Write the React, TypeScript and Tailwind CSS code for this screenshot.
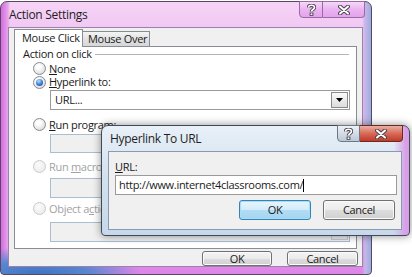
import React from 'react';

const font = "font-['Open_Sans',sans-serif] text-[11px] leading-[14px] tracking-[-0.3px] whitespace-nowrap";

const Radio: React.FC<{ checked?: boolean; disabled?: boolean }> = ({ checked, disabled }) => (
  <span
    className={`w-[13px] h-[13px] rounded-full border flex items-center justify-center shrink-0 ${
      disabled
        ? 'border-[#cacaca] bg-[radial-gradient(circle_at_40%_35%,#fbfbfb,#e8e8e8)]'
        : 'border-[#8a8a8a] bg-[radial-gradient(circle_at_40%_35%,#ffffff_20%,#cfcfcf)]'
    }`}
  >
    {checked && (
      <span className="w-[7px] h-[7px] rounded-full bg-[radial-gradient(circle_at_40%_30%,#b8e2ff,#2a73d0_60%,#164a9a)]" />
    )}
  </span>
);

const XGlyph: React.FC = () => (
  <svg width="12" height="10" viewBox="0 0 12 10">
    <path d="M2 1.5 L10 8.5 M10 1.5 L2 8.5" stroke="#4a4250" strokeWidth="4" strokeLinecap="round" />
    <path d="M2 1.5 L10 8.5 M10 1.5 L2 8.5" stroke="#ffffff" strokeWidth="2" strokeLinecap="round" />
  </svg>
);

const HelpGlyph: React.FC = () => (
  <svg width="9" height="12" viewBox="0 0 9 12">
    <path d="M1.5 3.5 C1.5 0.5 7.5 0.5 7.5 3.5 C7.5 5.5 4.5 5.5 4.5 7.5" fill="none" stroke="#4a4250" strokeWidth="3.6" />
    <path d="M1.5 3.5 C1.5 0.5 7.5 0.5 7.5 3.5 C7.5 5.5 4.5 5.5 4.5 7.5" fill="none" stroke="#ffffff" strokeWidth="1.6" />
    <rect x="2.6" y="8.6" width="3.8" height="3.2" fill="#4a4250" />
    <rect x="3.6" y="9.4" width="1.8" height="1.6" fill="#ffffff" />
  </svg>
);

const DropButton: React.FC<{ disabled?: boolean }> = ({ disabled }) => (
  <div
    className={`w-[17px] h-[16px] border flex items-center justify-center ${
      disabled ? 'border-[#c4ccd4] bg-[#ececec]' : 'border-[#8a8a8a] bg-[linear-gradient(180deg,#fafafa,#dcdcdc)]'
    }`}
  >
    <svg width="7" height="4" viewBox="0 0 7 4">
      <path d="M0 0 H7 L3.5 4 Z" fill={disabled ? '#b0b0b0' : '#000'} />
    </svg>
  </div>
);

const WinButton: React.FC<{ children: React.ReactNode; primary?: boolean; className?: string }> = ({ children, primary, className }) => (
  <div
    className={`rounded-[3px] border flex items-center justify-center text-[#1a1a1a] ${
      primary
        ? 'border-[#3c7fb1] bg-[linear-gradient(180deg,#e6f5fd_0%,#d2ecfa_50%,#b2dcf4_51%,#a4d4f0_100%)] shadow-[inset_0_0_0_1px_#9fe0ff]'
        : 'border-[#707070] bg-[linear-gradient(180deg,#f4f4f4_0%,#ebebeb_50%,#dddddd_51%,#d0d0d0_100%)] shadow-[inset_0_0_0_1px_#fbfbfb]'
    } ${className ?? ''}`}
  >
    {children}
  </div>
);

export default function App() {
  return (
    <div className={`relative w-[412px] h-[277px] bg-white overflow-hidden text-[#1a1a1a] ${font}`}>
      {/* Action Settings window */}
      <div className="mt-[1px] w-[372px] h-[274px] border border-[#5a4664] rounded-t-[7px] rounded-b-[4px] flex flex-col bg-[radial-gradient(ellipse_28%_10%_at_10%_100%,#3d74c4_0%,#5a86d0_50%,transparent_100%),linear-gradient(90deg,#d46ae0_0px,#e6a6ea_7px,transparent_9px),linear-gradient(270deg,#9aaede_0px,#c6b6e8_6px,transparent_9px),linear-gradient(180deg,#f6d4f6_0%,#ecbaf0_20%,#e7a6ec_60%,#de86e8_100%)]">
        <div className="h-[25px] flex items-center relative">
          <span className="pl-[8px] text-[12px] text-[#1e1e1e]">Action Settings</span>
          <div className="ml-auto mr-[6px] self-start -mt-px flex">
            <div className="w-[24px] h-[17px] border border-[#9a6aa4] rounded-bl-[4px] bg-[linear-gradient(180deg,#f6d8f8,#eab4f0_50%,#e4a2ec)] flex items-center justify-center">
              <HelpGlyph />
            </div>
            <div className="w-[42px] h-[17px] border border-l-0 border-[#9a6aa4] rounded-br-[4px] bg-[linear-gradient(180deg,#f6d8f8,#eab4f0_50%,#e4a2ec)] flex items-center justify-center">
              <XGlyph />
            </div>
          </div>
        </div>
        <div className="ml-[7px] w-[355px] h-[240px] border border-[#9c82aa] bg-[#f0f0f0] flex flex-col">
          {/* tabs */}
          <div className="ml-[5px] h-[19px] flex items-end">
            <div className="relative z-10 h-[18px] w-[69px] border border-b-0 border-[#898c95] bg-white pl-[7px] flex items-center">
              Mouse Click
            </div>
            <div className="h-[16px] w-[67px] border border-l-0 border-[#898c95] bg-[linear-gradient(180deg,#f4f4f4,#e2e2e2_50%,#d6d6d6)] pl-[5px] flex items-center">
              Mouse Over
            </div>
          </div>
          <div className="ml-[5px] -mt-px w-[343px] h-[204px] border border-[#898c95] bg-white flex flex-col">
            <div className="h-[15px] flex items-center">
              <span className="ml-[8px]">Action on click</span>
              <div className="flex-1 h-px bg-[#b4b4b4] ml-[3px] mr-[7px]" />
            </div>
            <div className="h-[14px] flex items-center ml-[18px] gap-[3px]">
              <Radio />
              <span><span className="underline">N</span>one</span>
            </div>
            <div className="h-[13px] flex items-center ml-[18px] gap-[3px]">
              <Radio checked />
              <span><span className="underline">H</span>yperlink to:</span>
            </div>
            <div className="mt-[1px] ml-[35px] w-[300px] h-[20px] border border-[#9a9a9a] bg-white flex items-center">
              <span className="pl-[4px]">URL...</span>
              <div className="ml-auto mr-px"><DropButton /></div>
            </div>
            <div className="mt-[8px] h-[14px] flex items-center ml-[18px] gap-[3px]">
              <Radio />
              <span><span className="underline">R</span>un program:</span>
            </div>
            <div className="mt-[2px] ml-[35px] w-[300px] h-[19px] border border-[#aabed2] bg-[#f0f0f0]" />
            <div className="mt-[7px] h-[14px] flex items-center ml-[18px] gap-[3px] text-[#a2a2a2]">
              <Radio disabled />
              <span>Run <span className="underline">m</span>acro:</span>
            </div>
            <div className="mt-[4px] ml-[35px] w-[300px] h-[20px] border border-[#aabed2] bg-[#f0f0f0] flex items-center">
              <div className="ml-auto mr-px"><DropButton disabled /></div>
            </div>
            <div className="mt-[4px] h-[14px] flex items-center ml-[18px] gap-[3px] text-[#a2a2a2]">
              <Radio disabled />
              <span>Object a<span className="underline">c</span>tion:</span>
            </div>
            <div className="mt-[6px] ml-[35px] w-[300px] h-[20px] border border-[#aabed2] bg-[#f0f0f0] flex items-center">
              <div className="ml-auto mr-px"><DropButton disabled /></div>
            </div>
          </div>
          <div className="mt-[2px] flex justify-end gap-[15px] pr-[4px]">
            <WinButton className="w-[70px] h-[15px]">OK</WinButton>
            <WinButton className="w-[71px] h-[15px]">Cancel</WinButton>
          </div>
        </div>
      </div>

      {/* Hyperlink To URL window */}
      <div className="absolute left-[101px] top-[125px] w-[309px] h-[111px] border border-[#3e4a5c] rounded-t-[7px] rounded-b-[4px] flex flex-col shadow-[0_0_9px_rgba(0,0,0,0.45)] bg-[linear-gradient(90deg,transparent_95%,#d89ee6_99%),linear-gradient(180deg,#e8f0f8_0%,#d4e2ef_45%,#c6d8ea_100%)]">
        <div className="h-[25px] flex items-center">
          <span className="pl-[8px] text-[12px] text-[#1e1e1e]">Hyperlink To URL</span>
          <div className="ml-auto mr-[6px] self-start -mt-px flex">
            <div className="w-[23px] h-[17px] border border-[#6c7888] rounded-bl-[4px] bg-[linear-gradient(180deg,#eef2f6,#d4dce6_50%,#bcc8d6)] flex items-center justify-center">
              <HelpGlyph />
            </div>
            <div className="w-[43px] h-[17px] border border-l-0 border-[#6a2a24] rounded-br-[4px] bg-[linear-gradient(180deg,#eab0a4,#d86a58_50%,#c23a28)] flex items-center justify-center">
              <XGlyph />
            </div>
          </div>
        </div>
        <div className="ml-[6px] w-[294px] h-[79px] border border-[#8a9ab0] bg-[#f0f0f0] flex flex-col">
          <div className="mt-[8px] ml-[6px] h-[14px] flex items-center">
            <span><span className="underline">U</span>RL:</span>
          </div>
          <div className="mt-[1px] ml-[6px] w-[282px] h-[20px] border border-[#9a9a9a] bg-white flex items-center">
            <span className="pl-[3px]">http://www.internet4classrooms.com/</span>
            <span className="w-px h-[13px] bg-black" />
          </div>
          <div className="mt-[5px] ml-[130px] flex gap-[12px]">
            <WinButton primary className="w-[72px] h-[20px]">OK</WinButton>
            <WinButton className="w-[72px] h-[20px]">Cancel</WinButton>
          </div>
        </div>
      </div>
    </div>
  );
}
